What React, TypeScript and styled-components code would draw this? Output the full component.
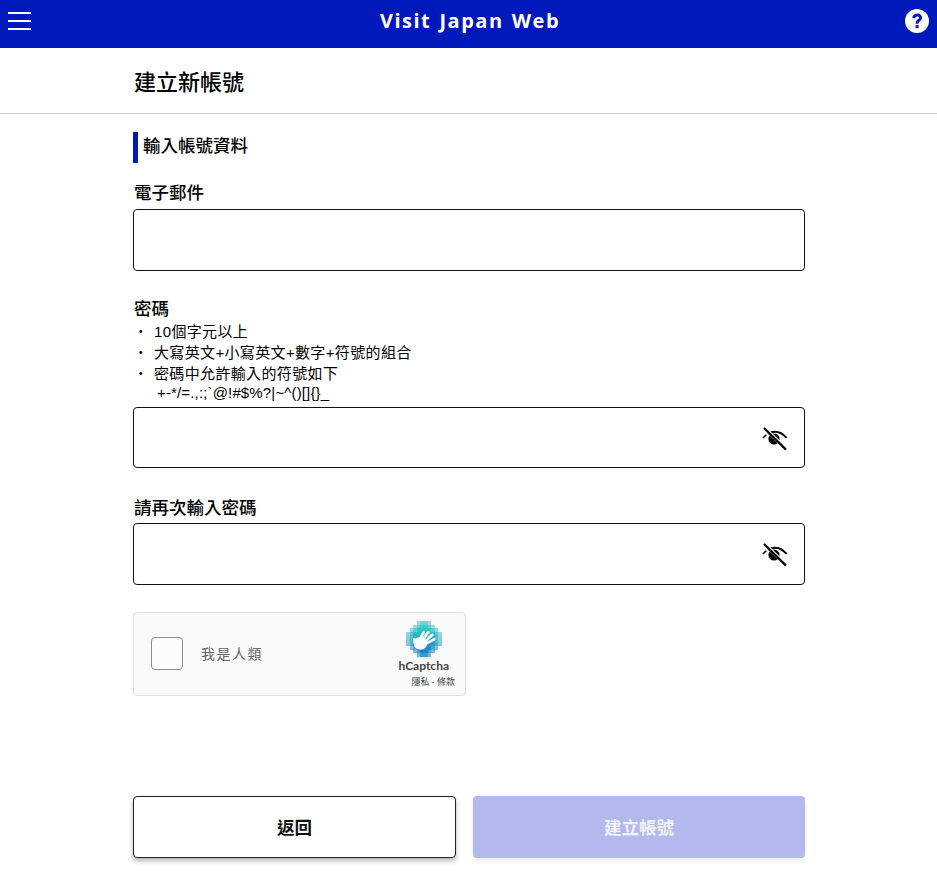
import React from 'react';
import styled, { createGlobalStyle } from 'styled-components';

const CJK = '"Noto Sans CJK TC", "Noto Sans CJK JP"';

const GlobalStyle = createGlobalStyle`
  html, body {
    margin: 0;
    padding: 0;
    background: #fff;
    color: #000;
    font-family: "Open Sans", ${CJK}, sans-serif;
  }
  * { box-sizing: border-box; }
`;

const Page = styled.div`
  width: 937px;
  height: 882px;
  overflow: hidden;
  display: flex;
  flex-direction: column;
`;

const Header = styled.header`
  height: 48px;
  flex: none;
  background: #0019bb;
  display: flex;
  align-items: center;
  justify-content: space-between;
  padding: 0 8px 6px;
`;

const HeaderTitle = styled.div`
  color: #fff;
  font-size: 20px;
  font-weight: 700;
  letter-spacing: 1.5px;
  word-spacing: 1.5px;
  margin: 0 0 2px 3px;
`;

const TitleBar = styled.div`
  height: 66px;
  flex: none;
  border-bottom: 1px solid #ccc;
  padding: 0 0 0 134px;
  display: flex;
  align-items: center;
`;

const PageTitle = styled.h1`
  margin: 0;
  font-size: 22px;
  font-weight: 500;
  line-height: 30px;
`;

const Main = styled.main`
  width: 672px;
  margin-left: 133px;
  display: flex;
  flex-direction: column;
`;

const Section = styled.h2`
  margin: 18px 0 0;
  height: 31px;
  border-left: 5px solid #0019bb;
  padding-left: 5px;
  font-size: 17.5px;
  font-weight: 500;
  line-height: 27px;
`;

const Field = styled.div<{ $gap?: number }>`
  margin-top: ${(p) => p.$gap ?? 0}px;
`;

const Label = styled.div`
  height: 24px;
  font-size: 17.5px;
  font-weight: 500;
  line-height: 22px;
  margin-left: 1px;
`;

const Hints = styled.ul`
  list-style: none;
  margin: 0;
  padding: 0;
  font-family: "Liberation Sans", ${CJK}, sans-serif;
  font-size: 15px;
  letter-spacing: 0.35px;
  line-height: 21px;
`;

const Hint = styled.li`
  display: flex;
  height: 21px;
`;

const Dot = styled.span`
  width: 21px;
  flex: none;
  padding-left: 4px;
  font-weight: 700;
`;

const SymbolLine = styled.li`
  height: 20px;
  line-height: 17px;
  padding-left: 24px;
  letter-spacing: 0.15px;
`;

const InputBox = styled.div<{ $mt?: number; $h?: number }>`
  height: ${(p) => p.$h ?? 62}px;
  margin-top: ${(p) => p.$mt ?? 0}px;
  border: 1px solid #111;
  border-radius: 4px;
  display: flex;
  align-items: center;
  justify-content: flex-end;
  padding-right: 16px;
  background: #fff;
`;

const Captcha = styled.div`
  width: 333px;
  height: 84px;
  margin-top: 27px;
  background: #fafafa;
  border: 1px solid #e0e0e0;
  border-radius: 4px;
  display: flex;
  align-items: center;
  padding: 0 0 2px 17px;
  position: relative;
`;

const CheckBox = styled.div`
  width: 32px;
  height: 33px;
  border: 1px solid #8e8e8e;
  border-radius: 4px;
  background: #fcfcfc;
`;

const CaptchaText = styled.div`
  margin-left: 18px;
  font-size: 14px;
  color: #666;
  letter-spacing: 1.5px;
`;

const CaptchaBrand = styled.div`
  position: absolute;
  right: 10px;
  top: 8px;
  display: flex;
  flex-direction: column;
  align-items: flex-end;
`;

const LogoWrap = styled.div`
  width: 36px;
  height: 36px;
  margin-right: 13px;
`;

const BrandName = styled.div`
  font-family: Lato, "Open Sans", sans-serif;
  font-size: 12px;
  font-weight: 700;
  color: #444;
  line-height: 14px;
  margin: 2px 6px 0 0;
`;

const Legal = styled.div`
  font-size: 9px;
  color: #444;
  line-height: 10px;
  margin-top: 4px;
`;

const Actions = styled.div`
  margin-top: 100px;
  display: flex;
  gap: 17px;
`;

const Button = styled.button<{ $primary?: boolean }>`
  flex: ${(p) => (p.$primary ? '1' : '0 0 323px')};
  height: 62px;
  border-radius: 4px;
  font-family: inherit;
  font-size: 17.5px;
  font-weight: 700;
  padding: 0 0 2px;
  border: ${(p) => (p.$primary ? 'none' : '1px solid #222')};
  background: ${(p) => (p.$primary ? '#b2b9ec' : '#fff')};
  color: ${(p) => (p.$primary ? '#f0f2fc' : '#111')};
  box-shadow: ${(p) =>
    p.$primary ? '0 3px 5px rgba(0,0,0,0.08)' : '0 3px 5px rgba(0,0,0,0.3)'};
`;

const Menu = () => (
  <svg width="24" height="20" viewBox="0 0 24 20">
    <path d="M0 2h23M0 10h23M0 18h23" stroke="#fff" strokeWidth="2" />
  </svg>
);

const Help = () => (
  <svg width="24" height="24" viewBox="0 0 24 24">
    <circle cx="12" cy="12" r="12" fill="#fff" />
    <path
      d="M7.3 9c.2-2.8 2.1-4.5 4.9-4.5 2.9 0 4.9 1.7 4.9 4.1 0 1.7-.9 2.7-2.2 3.6-1 .7-1.3 1.1-1.3 2v.6h-2.9v-.8c0-1.6.6-2.5 1.8-3.4 1-.7 1.5-1.1 1.5-1.8 0-.8-.7-1.4-1.7-1.4-1.1 0-1.9.7-2 1.8z"
      fill="#0019bb"
    />
    <rect x="10.6" y="16.2" width="3" height="3" fill="#0019bb" />
  </svg>
);

const EyeOff = () => (
  <svg width="26" height="26" viewBox="0 0 26 26">
    <path
      d="M6 8.8C8 7.6 10.4 6.8 13.2 6.8c4.4 0 8 2.3 11.4 6.1"
      fill="none"
      stroke="#000"
      strokeWidth="2"
    />
    <path d="M1 13c1.2-1.4 2.2-2.3 3.4-3.1" fill="none" stroke="#000" strokeWidth="1.6" />
    <circle cx="12" cy="14" r="5.6" fill="#000" />
    <path d="M2.8 3.2 L24 24" stroke="#fff" strokeWidth="3.4" />
    <path d="M2 3 L24 24.6" stroke="#000" strokeWidth="2.2" />
  </svg>
);

const rowWidths = [4, 6, 8, 10, 10, 10, 10, 8, 6, 4];
const mix = (a: number, b: number, t: number) => Math.round(a + (b - a) * t);

const HCaptchaLogo = () => (
  <svg width="36" height="36" viewBox="0 0 10 10" shapeRendering="crispEdges">
    {rowWidths.map((w, y) =>
      Array.from({ length: w }, (_, i) => {
        const x = (10 - w) / 2 + i;
        const t = y / 9;
        const edge = Math.min(i, w - 1 - i);
        const opacity = edge === 0 ? 0.55 : edge === 1 ? 0.8 : 1;
        const fill = `rgb(${mix(60, 20, t)},${mix(215, 125, t)},${mix(195, 200, t)})`;
        return <rect key={`${x}-${y}`} x={x} y={y} width="1" height="1" fill={fill} opacity={opacity} />;
      })
    )}
    <g shapeRendering="geometricPrecision" stroke="#fff" strokeLinecap="round" fill="none">
      <ellipse cx="4" cy="6.2" rx="1.9" ry="1.75" fill="#fff" stroke="none" />
      <path strokeWidth="0.75" d="M3.5 5.6 4.9 3.2M4.3 5.7 6.2 3.1M5 6 7.3 3.8M5.2 6.5 7.8 5.1M2.6 6.4 2.3 5" />
    </g>
  </svg>
);

export default function App() {
  return (
    <Page>
      <GlobalStyle />
      <Header>
        <Menu />
        <HeaderTitle>Visit Japan Web</HeaderTitle>
        <Help />
      </Header>
      <TitleBar>
        <PageTitle>建立新帳號</PageTitle>
      </TitleBar>
      <Main>
        <Section>輸入帳號資料</Section>
        <Field $gap={18}>
          <Label>電子郵件</Label>
          <InputBox $mt={4} />
        </Field>
        <Field $gap={26}>
          <Label>密碼</Label>
          <Hints>
            <Hint>
              <Dot>･</Dot>10個字元以上
            </Hint>
            <Hint>
              <Dot>･</Dot>大寫英文+小寫英文+數字+符號的組合
            </Hint>
            <Hint>
              <Dot>･</Dot>密碼中允許輸入的符號如下
            </Hint>
            <SymbolLine>+-*/=.,:;`@!#$%?|~^()[]{'{}'}_</SymbolLine>
          </Hints>
          <InputBox $mt={3} $h={61}>
            <EyeOff />
          </InputBox>
        </Field>
        <Field $gap={28}>
          <Label>請再次輸入密碼</Label>
          <InputBox $mt={3}>
            <EyeOff />
          </InputBox>
        </Field>
        <Captcha>
          <CheckBox />
          <CaptchaText>我是人類</CaptchaText>
          <CaptchaBrand>
            <LogoWrap>
              <HCaptchaLogo />
            </LogoWrap>
            <BrandName>hCaptcha</BrandName>
            <Legal>隱私 - 條款</Legal>
          </CaptchaBrand>
        </Captcha>
        <Actions>
          <Button>返回</Button>
          <Button $primary>建立帳號</Button>
        </Actions>
      </Main>
    </Page>
  );
}
